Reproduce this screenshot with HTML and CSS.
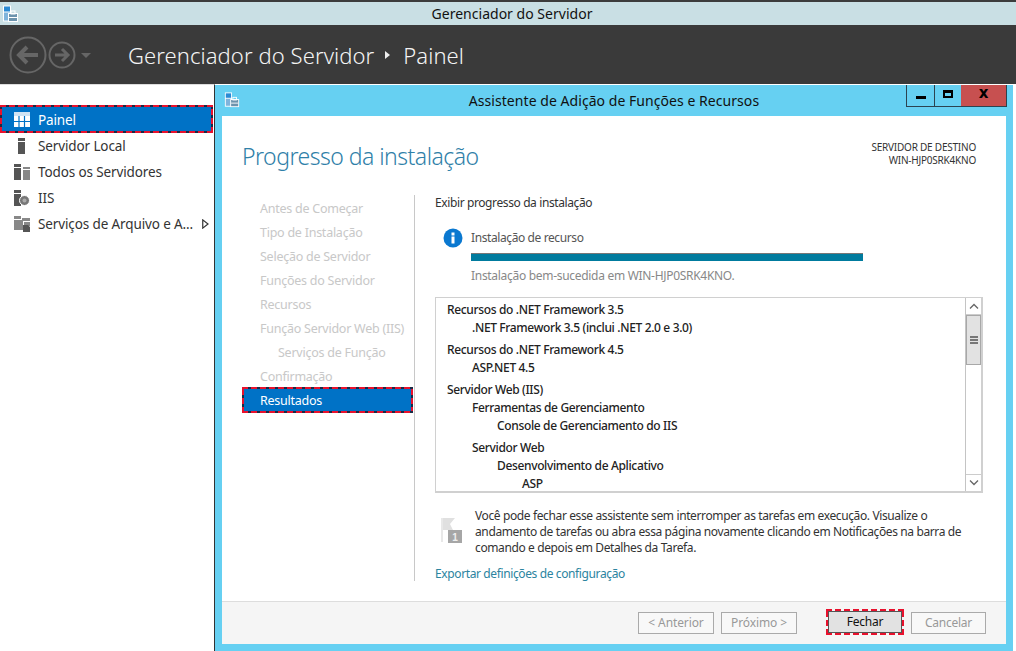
FILE: index.html
```html
<!DOCTYPE html>
<html lang="pt-BR">
<head>
<meta charset="utf-8">
<title>Gerenciador do Servidor</title>
<link rel="stylesheet" href="styles.css">
</head>
<body>
<div class="app">
  <div class="app-title">
    <svg class="app-icon" width="18" height="18" viewBox="0 0 18 18"><rect x="2" y="0.5" width="8" height="16" fill="#fff"/><rect x="3" y="1.5" width="6" height="5" fill="#2a8ad4"/><rect x="3" y="7.5" width="6" height="8" fill="#7fb4dc"/><rect x="7" y="8" width="10" height="9" fill="#fff"/><rect x="8" y="9" width="8" height="7" fill="#6c93ad"/><rect x="10" y="6" width="4" height="3" fill="none" stroke="#fff"/><rect x="8" y="12" width="8" height="1" fill="#fff"/></svg>
    <span class="app-title-text">Gerenciador do Servidor</span>
  </div>
  <header class="app-head">
    <svg class="nav-arrows" width="84" height="40" viewBox="0 0 84 40">
      <g fill="none" stroke="#666" stroke-width="2"><circle cx="19" cy="20" r="17.500"/><circle cx="53" cy="20" r="12.500"/></g>
      <path d="M9 20h20M18 12l-8 8 8 8" fill="none" stroke="#666" stroke-width="4"/>
      <path d="M46 20h13M53 14l6 6-6 6" fill="none" stroke="#666" stroke-width="3"/>
      <path d="M72 18h10l-5 5z" fill="#666"/>
    </svg>
    <div class="crumbs"><span>Gerenciador do Servidor</span><i class="crumb-sep"></i><span>Painel</span></div>
  </header>
  <div class="app-body">
    <nav class="side">
      <a class="side-item side-item-on dash">
        <svg width="16" height="16" viewBox="0 0 16 16"><rect width="16" height="15" fill="#fff"/><rect x="0" y="0" width="16" height="4" fill="#cfe3f3"/><path d="M5 4v11M10.500 4v11M0 9.500h16" stroke="#0072c6" stroke-width="1.200"/></svg>
        Painel</a>
      <a class="side-item">
        <svg width="16" height="16" viewBox="0 0 16 16"><rect x="4" y="0" width="7" height="3" fill="#555"/><rect x="4" y="4" width="7" height="12" fill="#555"/></svg>
        Servidor Local</a>
      <a class="side-item">
        <svg width="16" height="16" viewBox="0 0 16 16"><rect x="0" y="0" width="7" height="3" fill="#555"/><rect x="0" y="4" width="7" height="12" fill="#555"/><rect x="9" y="3" width="7" height="2" fill="#888"/><rect x="9" y="6" width="7" height="10" fill="#888"/></svg>
        Todos os Servidores</a>
      <a class="side-item">
        <svg width="16" height="16" viewBox="0 0 16 16"><rect x="0" y="0" width="7" height="3" fill="#555"/><rect x="0" y="4" width="7" height="12" fill="#555"/><circle cx="10.500" cy="10.500" r="5" fill="#777" stroke="#fff"/><circle cx="10.500" cy="10.500" r="2" fill="#aaa"/></svg>
        IIS</a>
      <a class="side-item">
        <svg width="16" height="16" viewBox="0 0 16 16"><rect x="0" y="0" width="7" height="3" fill="#888"/><rect x="0" y="4" width="9" height="10" fill="#888"/><rect x="8" y="2" width="8" height="3" fill="#888"/><rect x="10" y="6" width="6" height="4" fill="#888"/><path d="M9 9h5l2 2v5H9z" fill="#555"/></svg>
        Serviços de Arquivo e A...
        <svg class="side-more" width="7" height="10" viewBox="0 0 7 10"><path d="M.75.9v8.200L6 5z" fill="#fff" stroke="#333" stroke-width="1.200"/></svg></a>
    </nav>
    <div class="canvas">
      <section class="window">
        <div class="win-title">
          <svg class="win-icon" width="16" height="16" viewBox="0 0 18 18"><rect x="1" y="0.5" width="8" height="16" fill="#fff"/><rect x="2" y="1.5" width="6" height="5" fill="#2a8ad4"/><rect x="2" y="7.5" width="6" height="8" fill="#7fb4dc"/><rect x="7" y="8" width="10" height="9" fill="#fff"/><rect x="8" y="9" width="8" height="7" fill="#6c93ad"/><rect x="10" y="6" width="4" height="3" fill="none" stroke="#fff"/><rect x="8" y="12" width="8" height="1" fill="#fff"/></svg>
          <span class="win-title-text">Assistente de Adição de Funções e Recursos</span>
          <div class="win-ctrls">
            <span class="ctrl ctrl-min"><i></i></span>
            <span class="ctrl ctrl-max"><i></i></span>
            <span class="ctrl ctrl-close">x</span>
          </div>
        </div>
        <div class="win-panel">
          <div class="win-top">
            <h1>Progresso da instalação</h1>
            <div class="dest">SERVIDOR DE DESTINO<br>WIN-HJP0SRK4KNO</div>
          </div>
          <div class="win-main">
            <ul class="steps">
              <li>Antes de Começar</li>
              <li>Tipo de Instalação</li>
              <li>Seleção de Servidor</li>
              <li>Funções do Servidor</li>
              <li>Recursos</li>
              <li>Função Servidor Web (IIS)</li>
              <li class="step-sub">Serviços de Função</li>
              <li>Confirmação</li>
              <li class="step-on dash">Resultados</li>
            </ul>
            <div class="content">
              <div class="sec-title">Exibir progresso da instalação</div>
              <div class="status">
                <svg width="20" height="20" viewBox="0 0 20 20"><circle cx="10" cy="10" r="9.500" fill="#0a78d0"/><rect x="8.500" y="8.500" width="3" height="7" fill="#fff"/><rect x="8.500" y="4.500" width="3" height="3" fill="#fff"/></svg>
                <div class="status-body">
                  <div class="status-name">Instalação de recurso</div>
                  <div class="bar"></div>
                  <div class="status-msg">Instalação bem-sucedida em WIN-HJP0SRK4KNO.</div>
                </div>
              </div>
              <div class="listbox">
                <div class="list">
                  <div class="l0 gap0">Recursos do .NET Framework 3.5</div>
                  <div class="l1">.NET Framework 3.5 (inclui .NET 2.0 e 3.0)</div>
                  <div class="l0">Recursos do .NET Framework 4.5</div>
                  <div class="l1">ASP.NET 4.5</div>
                  <div class="l0">Servidor Web (IIS)</div>
                  <div class="l1">Ferramentas de Gerenciamento</div>
                  <div class="l2">Console de Gerenciamento do IIS</div>
                  <div class="l1 gap">Servidor Web</div>
                  <div class="l2">Desenvolvimento de Aplicativo</div>
                  <div class="l3">ASP</div>
                </div>
                <div class="scroll">
                  <span class="sb-btn sb-up"><svg width="10" height="6" viewBox="0 0 10 6"><path d="M1 5.500l4-4 4 4" fill="none" stroke="#666" stroke-width="1.300"/></svg></span>
                  <span class="sb-thumb"><i></i></span>
                  <span class="sb-track"></span>
                  <span class="sb-btn sb-down"><svg width="10" height="6" viewBox="0 0 10 6"><path d="M1 .5l4 4 4-4" fill="none" stroke="#666" stroke-width="1.300"/></svg></span>
                </div>
              </div>
              <div class="note">
                <svg width="22" height="26" viewBox="0 0 22 26"><path d="M1 0h2v24H1z" fill="#e8e8e8"/><path d="M3 0h12l-5 6 3 6H3z" fill="#e0e0e0"/><rect x="8" y="12" width="14" height="13" fill="#a6a6a6"/><text x="15" y="22.500" class="note-num">1</text></svg>
                <p>Você pode fechar esse assistente sem interromper as tarefas em execução. Visualize o andamento de tarefas ou abra essa página novamente clicando em Notificações na barra de comando e depois em Detalhes da Tarefa.</p>
              </div>
              <a class="export">Exportar definições de configuração</a>
            </div>
          </div>
          <div class="footer">
            <span class="btn btn-off">&lt; Anterior</span>
            <span class="btn btn-off">Próximo &gt;</span>
            <span class="btn btn-main dash">Fechar</span>
            <span class="btn btn-off">Cancelar</span>
          </div>
        </div>
      </section>
    </div>
  </div>
</div>
</body>
</html>
```
FILE: styles.css
```css
* { box-sizing: border-box; }
html, body { margin: 0; height: 100%; overflow: hidden; }
body { font-family: "Noto Sans", "Open Sans", sans-serif; font-size: 12px; color: #222; background: #fff; }
.app { width: 1016px; height: 651px; display: flex; flex-direction: column; border-top: 2px solid #3c3c3c; }
.app-title { height: 23px; flex: none; background: #c9dfe4; display: flex; align-items: center; justify-content: center; padding-left: 8px; position: relative; }
.app-icon { position: absolute; left: 1px; top: 3px; }
.app-title-text { font-size: 14px; color: #111; letter-spacing: 0.02px; }
.app-head { height: 59px; flex: none; background: #3a3a3a; display: flex; align-items: center; padding-left: 9px; }
.crumbs { display: flex; align-items: center; margin-left: 35px; font-size: 22px; font-weight: 300; color: #f4f4f4; letter-spacing: 0.08px; }
.crumb-sep { width: 0; height: 0; margin: 0 13px 0 11px; border-left: 5px solid #eee; border-top: 4px solid transparent; border-bottom: 4px solid transparent; }
.app-body { flex: 1; display: flex; min-height: 0; }
.side { width: 215px; flex: none; padding-top: 22px; background: #fff; border-right: 1px solid #333; border-top: 1px solid #ddd; display: flex; flex-direction: column; }
.side-item { height: 26px; display: flex; align-items: center; gap: 8px; padding-left: 14px; font-size: 13.5px; color: #333; letter-spacing: -0.12px; position: relative; }
.dash {
  --gap: #1c2a44;
  --dash: #e8112d;
  background-image:
    repeating-linear-gradient(90deg, var(--dash) 0 6px, var(--gap) 6px 9px),
    repeating-linear-gradient(90deg, var(--dash) 0 6px, var(--gap) 6px 9px),
    repeating-linear-gradient(0deg, var(--dash) 0 6px, var(--gap) 6px 9px),
    repeating-linear-gradient(0deg, var(--dash) 0 6px, var(--gap) 6px 9px);
  background-size: 100% 2px, 100% 2px, 2px 100%, 2px 100%;
  background-position: 0 0, 0 100%, 0 0, 100% 0;
  background-repeat: no-repeat;
}
.side-item-on { height: 28px; margin: -2px 1px 0 0; padding-top: 2px; background-color: #0072c6; color: #fff; }
.side-more { position: absolute; left: 202px; top: 8px; }
.canvas { flex: 1; position: relative; }
.window { position: absolute; left: 0; top: 1px; width: 798px; height: 566px; background: #66d0f2; display: flex; flex-direction: column; }
.win-title { height: 31px; flex: none; position: relative; display: flex; align-items: center; justify-content: center; }
.win-icon { position: absolute; left: 9px; top: 7px; }
.win-title-text { font-size: 14px; color: #111; letter-spacing: 0.05px; }
.win-ctrls { position: absolute; right: 6px; top: 0; height: 22px; display: flex; border: 1px solid #2c4350; border-top: 0; }
.ctrl { height: 21px; display: flex; align-items: center; justify-content: center; }
.ctrl-min { width: 28px; border-right: 1px solid #2c4350; }
.ctrl-min i { width: 10px; height: 3px; background: #000; margin-top: 3px; }
.ctrl-max { width: 26px; }
.ctrl-max i { width: 10px; height: 8px; border: 2px solid #000; border-top-width: 3px; margin-bottom: 3px; }
.ctrl-close { width: 45px; background: #c75050; font-family: "DejaVu Sans", sans-serif; font-size: 15px; font-weight: 700; color: #000; line-height: 1; padding-bottom: 5px; }
.win-panel { width: 784px; height: 528px; margin-left: 7px; background: #fff; display: flex; flex-direction: column; }
.win-top { height: 79px; flex: none; display: flex; justify-content: space-between; padding: 24px 30px 0 20px; }
.win-top h1 { margin: 0; font-size: 23px; font-weight: 300; color: #2f80a8; line-height: 32px; letter-spacing: -0.52px; white-space: nowrap; }
.dest { margin-top: 1px; font-size: 10px; line-height: 13px; text-align: right; color: #333; letter-spacing: -0.22px; }
.win-main { flex: 1; display: flex; min-height: 0; }
.steps { width: 193px; height: 386px; margin: 0; padding: 2px 0 0 20px; list-style: none; border-right: 1px solid #c8c8c8; flex: none; }
.steps li { height: 24px; line-height: 24px; padding-left: 18px; color: #c8c8c8; font-size: 12.5px; letter-spacing: -0.25px; white-space: nowrap; }
.steps .step-sub { padding-left: 36px; }
.steps .step-on { height: 26px; line-height: 27px; margin-top: -2px; width: 171px; background-color: #0072c6; color: #fff; }
.content { flex: 1; padding-left: 20px; min-width: 0; }
.sec-title { height: 16px; line-height: 16px; color: #333; letter-spacing: -0.39px; }
.status { display: flex; gap: 8px; margin: 10px 0 0 8px; height: 75px; }
.status svg { margin-top: 7px; flex: none; }
.status-body { display: flex; flex-direction: column; }
.status-name { height: 16px; line-height: 16px; margin-top: 9px; color: #555; letter-spacing: -0.4px; }
.bar { width: 392px; height: 8px; margin-top: 7px; background: #007b9e; border-top: 1px solid #777; }
.status-msg { margin-top: 7px; line-height: 16px; color: #888; letter-spacing: -0.3px; }
.listbox { width: 548px; height: 196px; margin-top: 1px; border: 1px solid #d0d0d0; border-width: 1px 2px 2px 1px; display: flex; overflow: hidden; }
.list { flex: 1; padding-top: 3px; font-size: 12px; color: #222; letter-spacing: -0.35px; font-weight: 500; }
.list div { height: 18px; line-height: 18px; }
.l0 { padding-left: 11px; margin-top: 4px; }
.list .gap0 { margin-top: 0; }
.l1 { padding-left: 36px; }
.l2 { padding-left: 61px; }
.l3 { padding-left: 86px; }
.list .gap { margin-top: 4px; }
.scroll { width: 16px; flex: none; border-left: 1px solid #c4c4c4; display: flex; flex-direction: column; background: #fff; }
.sb-btn { height: 17px; display: flex; align-items: center; justify-content: center; flex: none; }
.sb-up { border-bottom: 1px solid #ccc; }
.sb-down { border-top: 1px solid #ccc; }
.sb-thumb { height: 50px; flex: none; background: #e2e2e2; border: 1px solid #a8a8a8; display: flex; align-items: center; justify-content: center; }
.sb-thumb i { width: 8px; height: 8px; background: repeating-linear-gradient(#777 0 2px, #e2e2e2 2px 3px); }
.sb-track { flex: 1; }
.note { display: flex; gap: 13px; margin: 15px 0 0 5px; align-items: flex-start; }
.note svg { margin-top: 10px; flex: none; }
.note-num { font-family: "Liberation Sans", sans-serif; font-size: 10px; font-weight: 700; fill: #eee; text-anchor: middle; }
.note p { margin: 0; width: 492px; line-height: 16px; color: #333; letter-spacing: -0.38px; }
.export { display: block; margin-top: 10px; line-height: 16px; color: #2c84a0; letter-spacing: -0.38px; }
.footer { height: 43px; flex: none; background: #f5f5f5; border-top: 1px solid #ddd; display: flex; align-items: flex-start; padding: 10px 20px 0 416px; gap: 7px; }
.btn { width: 76px; height: 22px; line-height: 20px; text-align: center; border: 1px solid #aaa; letter-spacing: -0.1px; }
.btn:last-child { width: 75px; letter-spacing: -0.25px; }
.btn-off { color: #999; background: #f8f8f8; }
.btn-main { --gap: #f5f5f5; width: 78px; height: 26px; margin: -3px 0 0 22px; line-height: 26px; border: 0; background-color: #e2e2e2; color: #111; letter-spacing: -0.2px; outline: 1px solid #555; outline-offset: -3px; }
```
